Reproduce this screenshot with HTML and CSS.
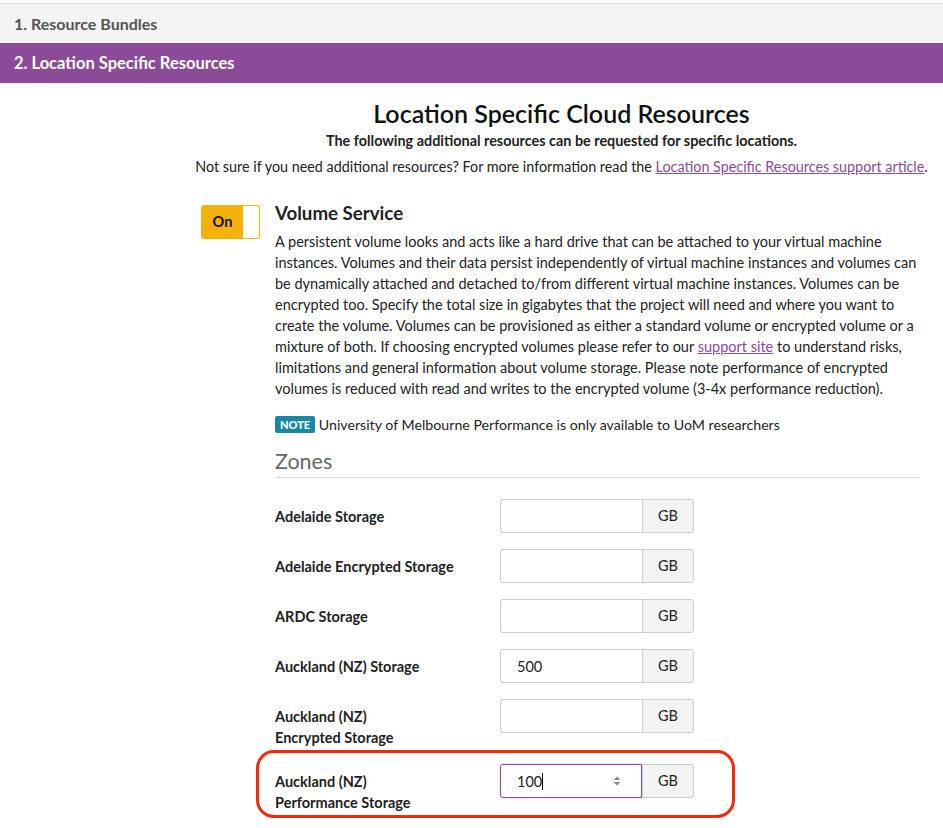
FILE: index.html
```html
<!DOCTYPE html>
<html lang="en">
<head>
    <meta charset="UTF-8">
    <meta name="viewport" content="width=device-width, initial-scale=1.0">
    <title>Location Specific Resources</title>
    <link rel="stylesheet" href="styles.css">
</head>
<body>
    <div class="steps">
        <div class="step">1. Resource Bundles</div>
        <div class="step active">2. Location Specific Resources</div>
    </div>

    <div class="main">
        <h1>Location Specific Cloud Resources</h1>
        <p class="lead">The following additional resources can be requested for specific locations.</p>
        <p class="intro">Not sure if you need additional resources? For more information read the <a href="#">Location Specific Resources support article</a>.</p>

        <div class="service">
            <div class="toggle">
                <span class="toggle-label">On</span>
                <span class="toggle-knob"></span>
            </div>
            <div class="service-body">
                <h2>Volume Service</h2>
                <p class="desc">A persistent volume looks and acts like a hard drive that can be attached to your virtual machine instances. Volumes and their data persist independently of virtual machine instances and volumes can be dynamically attached and detached to/from different virtual machine instances. Volumes can be encrypted too. Specify the total size in gigabytes that the project will need and where you want to create the volume. Volumes can be provisioned as either a standard volume or encrypted volume or a mixture of both. If choosing encrypted volumes please refer to our <a href="#">support site</a> to understand risks, limitations and general information about volume storage. Please note performance of encrypted volumes is reduced with read and writes to the encrypted volume (3-4x performance reduction).</p>

                <p class="note"><span class="badge">NOTE</span> University of Melbourne Performance is only available to UoM researchers</p>

                <h3>Zones</h3>

                <div class="zone">
                    <label>Adelaide Storage</label>
                    <div class="input-group"><input type="text"><span class="addon">GB</span></div>
                </div>
                <div class="zone">
                    <label>Adelaide Encrypted Storage</label>
                    <div class="input-group"><input type="text"><span class="addon">GB</span></div>
                </div>
                <div class="zone">
                    <label>ARDC Storage</label>
                    <div class="input-group"><input type="text"><span class="addon">GB</span></div>
                </div>
                <div class="zone">
                    <label>Auckland (NZ) Storage</label>
                    <div class="input-group"><input type="text" value="500"><span class="addon">GB</span></div>
                </div>
                <div class="zone">
                    <label>Auckland (NZ)<br>Encrypted Storage</label>
                    <div class="input-group"><input type="text"><span class="addon">GB</span></div>
                </div>
                <div class="zone highlighted">
                    <label>Auckland (NZ)<br>Performance Storage</label>
                    <div class="input-group">
                        <div class="input focused">
                            <span class="value">100<span class="caret"></span></span>
                            <svg class="spin" width="10" height="14" viewBox="0 0 10 14">
                                <path d="M1.5 6 L5 2.5 L8.5 6 Z" fill="#888"/>
                                <path d="M1.5 8 L5 11.5 L8.5 8 Z" fill="#888"/>
                            </svg>
                        </div>
                        <span class="addon">GB</span>
                    </div>
                    <div class="callout"></div>
                </div>
                <div class="zone">
                    <label>Australian Capital Territory</label>
                    <div class="input-group"><input type="text"><span class="addon">GB</span></div>
                </div>
            </div>
        </div>
    </div>
</body>
</html>
```

FILE: styles.css
```css
body {
    margin: 0;
    padding-top: 3px;
    font-family: Lato, Arial, sans-serif;
    color: #222;
    background-color: white;
    height: 825px;
    overflow: hidden;
}
.step {
    height: 39px;
    line-height: 39px;
    padding: 0 14px;
    font-size: 16px;
    font-weight: 700;
    color: #555;
    background-color: #f4f4f4;
    border-top: 1px solid #ddd;
}
.step.active {
    height: 40px;
    line-height: 40px;
    font-size: 16.5px;
    border-top: none;
    color: white;
    background-color: #8c4b99;
}
.main {
    margin-left: 180px;
    padding: 0 15px;
}
h1 {
    margin: 16px 0 0;
    font-size: 25px;
    line-height: 28px;
    font-weight: 600;
    text-align: center;
    color: #111;
}
.lead {
    margin: 5px 0 0;
    font-size: 14.4px;
    line-height: 18px;
    font-weight: 700;
    text-align: center;
}
.intro {
    margin: 8px 0 0;
    font-size: 14.35px;
    line-height: 18px;
    text-align: center;
    white-space: nowrap;
}
a {
    color: #8c4b99;
}
.service {
    display: flex;
    gap: 15px;
    margin-top: 26px;
    padding-left: 6px;
}
.toggle {
    display: flex;
    width: 59px;
    height: 34px;
    margin-top: 3px;
    background-color: #f5b10b;
    border-radius: 3px;
    box-sizing: border-box;
    border: 1px solid #f5b10b;
    flex-shrink: 0;
}
.toggle-label {
    flex: 1;
    line-height: 32px;
    text-align: center;
    font-size: 14.5px;
    font-weight: 700;
    color: #111;
}
.toggle-knob {
    width: 16px;
    background-color: white;
    border-radius: 0 2px 2px 0;
}
.service-body {
    width: 645px;
}
h2 {
    margin: 0 0 7px;
    font-size: 18.7px;
    font-weight: 700;
    line-height: 22px;
}
.desc {
    margin: 0;
    font-size: 14.5px;
    line-height: 21px;
}
.note {
    margin: 15px 0 0;
    font-size: 14.2px;
    line-height: 21px;
}
.badge {
    display: inline-block;
    padding: 0 5px;
    font-size: 11px;
    font-weight: 900;
    line-height: 17px;
    color: white;
    background-color: #1789a4;
    border-radius: 2px;
    vertical-align: 1px;
}
h3 {
    margin: 13px 0 0;
    padding-bottom: 3px;
    font-size: 21.5px;
    font-weight: 400;
    color: #666;
    border-bottom: 1px solid #ddd;
}
.zone {
    display: flex;
    margin-top: 16px;
    position: relative;
}
h3 + .zone {
    margin-top: 21px;
}
.zone label {
    width: 225px;
    padding-top: 7px;
    font-size: 14.5px;
    font-weight: 700;
    line-height: 21px;
}
.input-group {
    display: flex;
    height: 34px;
}
.input-group input, .input {
    width: 142px;
    height: 34px;
    box-sizing: border-box;
    padding: 0 16px;
    font-family: inherit;
    font-size: 14.5px;
    color: #222;
    border: 1px solid #ccc;
    border-right: none;
    border-radius: 3px 0 0 3px;
}
.input {
    display: flex;
    align-items: center;
    justify-content: space-between;
    padding-right: 19px;
}
.input.focused {
    border: 1px solid #8c4b99;
    box-shadow: 0 0 3px rgba(140, 75, 153, 0.3);
}
.caret {
    display: inline-block;
    width: 1px;
    height: 17px;
    background-color: #111;
    vertical-align: -3px;
}
.addon {
    width: 52px;
    box-sizing: border-box;
    line-height: 32px;
    text-align: center;
    font-size: 14.5px;
    background-color: #f3f3f3;
    border: 1px solid #ccc;
    border-radius: 0 3px 3px 0;
}
.highlighted .callout {
    position: absolute;
    left: -19px;
    top: -14px;
    width: 479px;
    height: 68px;
    box-sizing: border-box;
    border: 3px solid #f1290c;
    border-radius: 18px;
}
```
